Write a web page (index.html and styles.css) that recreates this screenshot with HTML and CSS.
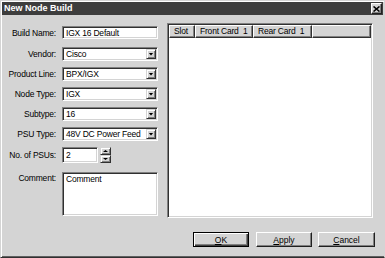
FILE: index.html
```html
<!DOCTYPE html>
<html lang="en">
<head>
    <meta charset="UTF-8">
    <meta name="viewport" content="width=device-width, initial-scale=1.0">
    <title>New Node Build</title>
    <link rel="stylesheet" href="styles.css">
</head>
<body>

    <div class="window">
        <div class="titlebar">
            <span class="title">New Node Build</span>
            <span class="close-btn">
                <svg width="7" height="6" viewBox="0 0 7 6"><path d="M0.5 0.5 L6.5 5.5 M6.5 0.5 L0.5 5.5" stroke="#000" stroke-width="1.6" fill="none"/></svg>
            </span>
        </div>

        <div class="content">
            <!-- left side: node properties -->
            <div class="form">
                <div class="row row-build">
                    <label>Build Name:</label>
                    <div class="field"><span class="value">IGX 16 Default</span></div>
                </div>
                <div class="row">
                    <label>Vendor:</label>
                    <div class="field combo"><span class="value">Cisco</span><span class="drop"></span></div>
                </div>
                <div class="row">
                    <label>Product Line:</label>
                    <div class="field combo"><span class="value">BPX/IGX</span><span class="drop"></span></div>
                </div>
                <div class="row">
                    <label>Node Type:</label>
                    <div class="field combo"><span class="value">IGX</span><span class="drop"></span></div>
                </div>
                <div class="row">
                    <label>Subtype:</label>
                    <div class="field combo"><span class="value">16</span><span class="drop"></span></div>
                </div>
                <div class="row">
                    <label>PSU Type:</label>
                    <div class="field combo"><span class="value">48V DC Power Feed</span><span class="drop"></span></div>
                </div>
                <div class="row row-spin">
                    <label>No. of PSUs:</label>
                    <div class="field spin-field"><span class="value">2</span></div>
                    <div class="spin">
                        <span class="spin-btn up"></span>
                        <span class="spin-btn down"></span>
                    </div>
                </div>
                <div class="row row-comment">
                    <label>Comment:</label>
                    <div class="field memo"><span class="value">Comment</span></div>
                </div>
            </div>

            <!-- right side: slot list -->
            <div class="listview">
                <div class="lv-header">
                    <span class="lv-col col-slot">Slot</span>
                    <span class="lv-col col-front">Front Card&nbsp; 1</span>
                    <span class="lv-col col-rear">Rear Card&nbsp; 1</span>
                    <span class="lv-col col-fill"></span>
                </div>
                <div class="lv-body"></div>
            </div>
        </div>

        <div class="buttons">
            <button class="btn btn-default"><u>O</u>K</button>
            <button class="btn"><u>A</u>pply</button>
            <button class="btn btn-cancel"><u>C</u>ancel</button>
        </div>
    </div>

</body>
</html>
```

FILE: styles.css
```css
* { margin: 0; padding: 0; box-sizing: border-box; }

body {
    width: 385px;
    height: 258px;
    overflow: hidden;
    background: #d4d4d4;
    color: #000;
    font-family: "Liberation Sans", Arial, sans-serif;
    font-size: 8.5px;
    letter-spacing: -0.2px;
}

/* --- WINDOW FRAME --- */
.window {
    width: 385px;
    height: 258px;
    padding: 1px;
    border: 1px solid;
    border-color: #d4d4d4 #d4d4d4 #303030 #d4d4d4;
    box-shadow: inset 1px 1px 0 #fff, inset 0 -1px 0 #606060;
    display: flex;
    flex-direction: column;
}

.titlebar {
    height: 13px;
    background: #3d3d3d;
    padding: 0 1px 0 2px;
    display: flex;
    align-items: center;
    justify-content: space-between;
}

.title {
    color: #fff;
    font-weight: bold;
    font-size: 9px;
    letter-spacing: 0;
    line-height: 13px;
}

.close-btn {
    width: 11px;
    height: 11px;
    background: #d4d4d4;
    border: 1px solid;
    border-color: #fff #202020 #202020 #fff;
    box-shadow: inset -1px -1px 0 #808080;
    display: flex;
    align-items: center;
    justify-content: center;
}

/* --- MAIN AREA --- */
.content {
    height: 207px;
    display: flex;
    padding: 8px 10px 0 0;
}

.form {
    width: 156px;
    padding-top: 3px;
    display: flex;
    flex-direction: column;
}

.row {
    height: 14px;
    margin-bottom: 6px;
    display: flex;
    align-items: center;
}

.row-build { height: 13px; margin-bottom: 8px; }
.row-spin { height: 16px; margin-bottom: 9px; }
.row-comment { height: 49px; align-items: flex-start; }

label {
    width: 54px;
    margin-right: 6px;
    text-align: right;
    white-space: nowrap;
    flex-shrink: 0;
}

.row-comment label { padding-top: 1px; }

/* sunken white box */
.field {
    width: 96px;
    height: 100%;
    background: #fff;
    padding: 1px;
    border: 1px solid;
    border-color: #808080 #fff #fff #808080;
    box-shadow: inset 1px 1px 0 #303030, inset -1px -1px 0 #d4d4d4;
    display: flex;
    align-items: center;
    white-space: nowrap;
    overflow: hidden;
}

.value { padding-left: 2px; }

.drop {
    margin-left: auto;
    width: 10px;
    height: 10px;
    flex-shrink: 0;
    background: #d4d4d4;
    border: 1px solid;
    border-color: #d4d4d4 #303030 #303030 #d4d4d4;
    box-shadow: inset 1px 1px 0 #fff, inset -1px -1px 0 #808080;
    display: flex;
    align-items: center;
    justify-content: center;
}

.drop::after {
    content: "";
    width: 5px;
    height: 3px;
    background: #000;
    clip-path: polygon(0 0, 100% 0, 50% 100%);
}

.spin-field { width: 36px; }

.spin {
    width: 11px;
    height: 16px;
    margin-left: 2px;
    display: flex;
    flex-direction: column;
}

.spin-btn {
    height: 8px;
    background: #d4d4d4;
    border: 1px solid;
    border-color: #d4d4d4 #303030 #303030 #d4d4d4;
    box-shadow: inset 1px 1px 0 #fff, inset -1px -1px 0 #808080;
    display: flex;
    align-items: center;
    justify-content: center;
}

.spin-btn::after {
    content: "";
    width: 5px;
    height: 2px;
    background: #000;
}

.spin-btn.up::after { clip-path: polygon(50% 0, 100% 100%, 0 100%); }
.spin-btn.down::after { clip-path: polygon(0 0, 100% 0, 50% 100%); }

.memo { align-items: flex-start; padding-top: 1px; }

/* --- LIST VIEW --- */
.listview {
    width: 206px;
    height: 195px;
    margin-left: 9px;
    background: #fff;
    padding: 1px;
    border: 1px solid;
    border-color: #808080 #fff #fff #808080;
    box-shadow: inset 1px 1px 0 #303030, inset -1px -1px 0 #d4d4d4;
    display: flex;
    flex-direction: column;
}

.lv-header {
    height: 13px;
    display: flex;
}

.lv-col {
    height: 13px;
    background: #d4d4d4;
    border: 1px solid;
    border-color: #fff #303030 #303030 #fff;
    box-shadow: inset -1px -1px 0 #808080;
    padding-left: 4px;
    line-height: 11px;
    white-space: nowrap;
}

.col-slot { width: 26px; }
.col-front { width: 58px; }
.col-rear { width: 59px; }
.col-fill { flex: 1; }

.lv-body { flex: 1; }

/* --- BUTTON ROW --- */
.buttons {
    margin-top: 10px;
    padding-right: 8px;
    display: flex;
    justify-content: flex-end;
    gap: 6px;
}

.btn {
    width: 56px;
    height: 15px;
    background: #d4d4d4;
    font: inherit;
    color: #000;
    border: 1px solid;
    border-color: #fff #202020 #202020 #fff;
    box-shadow: inset -1px -1px 0 #808080;
    text-align: center;
    line-height: 12px;
}

.btn-default {
    margin-right: 1px;
    border-color: #000;
    box-shadow: inset 1px 1px 0 #fff, inset -1px -1px 0 #404040, inset -2px -2px 0 #808080;
}

.btn-cancel { width: 57px; }
```
